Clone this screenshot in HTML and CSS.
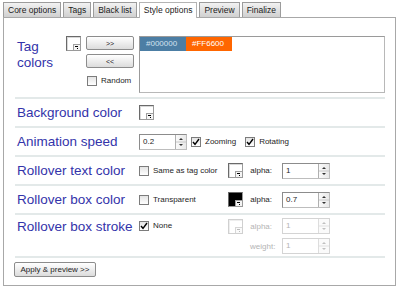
FILE: index.html
```html
<!DOCTYPE html>
<html lang="en">
<head>
  <meta charset="UTF-8" />
  <title>Style options</title>
  <link rel="stylesheet" href="styles.css">
</head>
<body>
  <div class="tabs">
    <span class="tab">Core options</span>
    <span class="tab">Tags</span>
    <span class="tab">Black list</span>
    <span class="tab active">Style options</span>
    <span class="tab">Preview</span>
    <span class="tab">Finalize</span>
  </div>

  <div class="panel">
    <!-- Tag colors -->
    <div class="tag-row">
      <div class="label tag-label">Tag<br>colors</div>
      <span class="swatch"></span>
      <div class="move">
        <button class="btn">&gt;&gt;</button>
        <button class="btn">&lt;&lt;</button>
        <label class="check random"><span class="box"></span>Random</label>
      </div>
      <div class="list">
        <span class="item dark">#000000</span>
        <span class="item orange">#FF6600</span>
      </div>
    </div>

    <div class="row">
      <div class="label">Background color</div>
      <div><span class="swatch"></span></div>
    </div>

    <div class="row">
      <div class="label">Animation speed</div>
      <div class="anim">
        <div class="spin">
          <span class="val">0.2</span>
          <span class="step"><svg width="10" height="14" viewBox="0 0 10 14"><path d="M3 5h4L5 3z M3 9h4l-2 2z"/><path d="M0 7h10" stroke="#c8c8c8"/></svg></span>
        </div>
        <label class="check zoom"><span class="box"><svg width="8" height="8" viewBox="0 0 8 8"><path d="M1 4l2 2.3L7 1" stroke="#000" stroke-width="1.4" fill="none"/></svg></span>Zooming</label>
        <label class="check rotate"><span class="box"><svg width="8" height="8" viewBox="0 0 8 8"><path d="M1 4l2 2.3L7 1" stroke="#000" stroke-width="1.4" fill="none"/></svg></span>Rotating</label>
      </div>
    </div>

    <div class="row">
      <div class="label">Rollover text color</div>
      <div class="ctrl">
        <label class="check"><span class="box"></span>Same as tag color</label>
        <span class="swatch"></span>
        <span class="sub">alpha:</span>
        <div class="spin">
          <span class="val">1</span>
          <span class="step"><svg width="10" height="14" viewBox="0 0 10 14"><path d="M3 5h4L5 3z M3 9h4l-2 2z"/><path d="M0 7h10" stroke="#c8c8c8"/></svg></span>
        </div>
      </div>
    </div>

    <div class="row">
      <div class="label">Rollover box color</div>
      <div class="ctrl">
        <label class="check"><span class="box"></span>Transparent</label>
        <span class="swatch black"></span>
        <span class="sub">alpha:</span>
        <div class="spin">
          <span class="val">0.7</span>
          <span class="step"><svg width="10" height="14" viewBox="0 0 10 14"><path d="M3 5h4L5 3z M3 9h4l-2 2z"/><path d="M0 7h10" stroke="#c8c8c8"/></svg></span>
        </div>
      </div>
    </div>

    <div class="row stroke-row">
      <div class="label">Rollover box stroke</div>
      <div class="ctrl stroke">
        <label class="check"><span class="box"><svg width="8" height="8" viewBox="0 0 8 8"><path d="M1 4l2 2.3L7 1" stroke="#000" stroke-width="1.4" fill="none"/></svg></span>None</label>
        <span class="swatch off"></span>
        <span class="sub off">alpha:</span>
        <div class="spin off">
          <span class="val">1</span>
          <span class="step"><svg width="10" height="14" viewBox="0 0 10 14"><path d="M3 5h4L5 3z M3 9h4l-2 2z"/><path d="M0 7h10" stroke="#e0e0e0"/></svg></span>
        </div>
        <span></span>
        <span></span>
        <span class="sub off">weight:</span>
        <div class="spin off">
          <span class="val">1</span>
          <span class="step"><svg width="10" height="14" viewBox="0 0 10 14"><path d="M3 5h4L5 3z M3 9h4l-2 2z"/><path d="M0 7h10" stroke="#e0e0e0"/></svg></span>
        </div>
      </div>
    </div>

    <button class="btn apply">Apply &amp; preview &gt;&gt;</button>
  </div>
</body>
</html>
```

FILE: styles.css
```css
* {
  box-sizing: border-box;
}
body {
  margin: 0;
  padding: 2px 0 0 3px;
  width: 400px;
  height: 290px;
  overflow: hidden;
  background: #fff;
  font-family: "Liberation Sans", Arial, sans-serif;
  font-size: 8px;
  color: #1e1e1e;
}

/* Tabs */
.tabs {
  display: flex;
  gap: 2px;
  height: 15px;
  position: relative;
  z-index: 1;
}
.tab {
  height: 15px;
  padding: 0 4px;
  border: 1px solid #9c9c9c;
  border-bottom: none;
  background: linear-gradient(#f2f2f2, #d0d0d0);
  font-size: 8.5px;
  line-height: 14px;
  color: #1a1a1a;
}
.tab.active {
  height: 16px;
  background: #fff;
  border-color: #b4b4b4;
}

/* Panel */
.panel {
  width: 393px;
  height: 269px;
  border: 1px solid #a8a8a8;
  padding: 18px 10px 0 11px;
}
.label {
  padding-left: 2px;
  font-size: 13.5px;
  line-height: 18px;
  color: #3333aa;
}
.row {
  display: grid;
  grid-template-columns: 124px 1fr;
  align-items: center;
  height: 29px;
  border-bottom: 2px solid #e3e9e9;
}

/* Tag colors row */
.tag-row {
  display: flex;
  align-items: flex-start;
  padding-bottom: 4px;
  border-bottom: 2px solid #e3e9e9;
}
.tag-label {
  width: 51px;
  margin-top: 3px;
  line-height: 16px;
}
.move {
  width: 48px;
  margin: 0 5px;
}
.move .btn + .btn {
  margin-top: 4px;
}
.random {
  margin: 8px 0 0 1px;
  gap: 2px;
}
.list {
  flex: 1;
  height: 57px;
  display: flex;
  align-items: flex-start;
  border: 1px solid #9a9a9a;
  border-right-color: #b8b8b8;
  border-bottom-color: #b8b8b8;
}
.item {
  width: 46px;
  height: 14px;
  padding-left: 6px;
  line-height: 14px;
  font-size: 8px;
}
.item.dark {
  background: #4c7ea4;
  color: #d2e2ef;
}
.item.orange {
  background: #ff6600;
  color: #fff;
}

/* Colour picker: white well with a small drop-down corner */
.swatch {
  display: block;
  position: relative;
  width: 15px;
  height: 15px;
  border: 1px solid #6a6a6a;
  border-right-color: #9a9a9a;
  border-bottom-color: #9a9a9a;
  background: #fff;
  box-shadow: inset 1px 1px 0 #d8d8d8;
}
.swatch::after {
  content: "";
  position: absolute;
  right: 0;
  bottom: 0;
  width: 6px;
  height: 5px;
  border-left: 1px solid #a0a0a0;
  border-top: 1px solid #a0a0a0;
  background: #f4f4f4 linear-gradient(#000, #000) 1px 1px / 3px 1px no-repeat;
}
.swatch::before {
  content: "";
  position: absolute;
  right: 2px;
  bottom: 1px;
  width: 1px;
  height: 1px;
  background: #000;
  z-index: 1;
}
.swatch.black {
  background: #000;
  box-shadow: none;
}
.swatch.off {
  border-color: #d0d0d0;
  box-shadow: inset 1px 1px 0 #eee;
}
.swatch.off::after {
  border-color: #d6d6d6;
  background: #fafafa linear-gradient(#bbb, #bbb) 1px 1px / 3px 1px no-repeat;
}
.swatch.off::before {
  background: #bbb;
}

.btn {
  display: block;
  width: 48px;
  height: 14px;
  padding: 0;
  border: 1px solid #8c8c8c;
  border-radius: 2px;
  background: linear-gradient(#fff, #dcdcdc);
  font-family: "Liberation Sans", Arial, sans-serif;
  font-size: 7px;
  color: #222;
}
.check {
  display: flex;
  align-items: center;
  gap: 4px;
  font-size: 8px;
  line-height: 10px;
  white-space: nowrap;
}
.box {
  display: flex;
  align-items: center;
  justify-content: center;
  width: 10px;
  height: 10px;
  border: 1px solid #7c7c7c;
  background: linear-gradient(#e4e4e4, #fff);
}

.spin {
  display: flex;
  width: 48px;
  height: 16px;
  border: 1px solid #8c8c8c;
  border-right-color: #bdbdbd;
  border-bottom-color: #bdbdbd;
  background: #fff;
}
.spin .val {
  flex: 1;
  padding-left: 3px;
  line-height: 14px;
  font-size: 8px;
}
.spin .step {
  width: 11px;
  border-left: 1px solid #b0b0b0;
  background: linear-gradient(90deg, #fafafa, #e8e8e8);
}
.spin svg {
  display: block;
  fill: #333;
}
.spin.off {
  border-color: #d4d4d4;
  color: #b4b4b4;
}
.spin.off .step {
  border-left-color: #ddd;
  background: #fafafa;
}
.spin.off svg {
  fill: #c0c0c0;
}

.anim {
  display: flex;
  align-items: center;
}
.zoom {
  margin-left: 4px;
}
.rotate {
  margin-left: 9px;
}
.ctrl {
  display: grid;
  grid-template-columns: 89px 22px 32px 48px;
  align-items: center;
}
.sub {
  padding-right: 10px;
  text-align: right;
}
.sub.off {
  color: #b4b4b4;
}
.stroke-row {
  height: 43px;
  align-items: start;
  padding-top: 3px;
}
.stroke {
  row-gap: 4px;
}
.apply {
  width: 82px;
  height: 15px;
  margin: 4px 0 0 -1px;
  font-size: 8px;
}
```
